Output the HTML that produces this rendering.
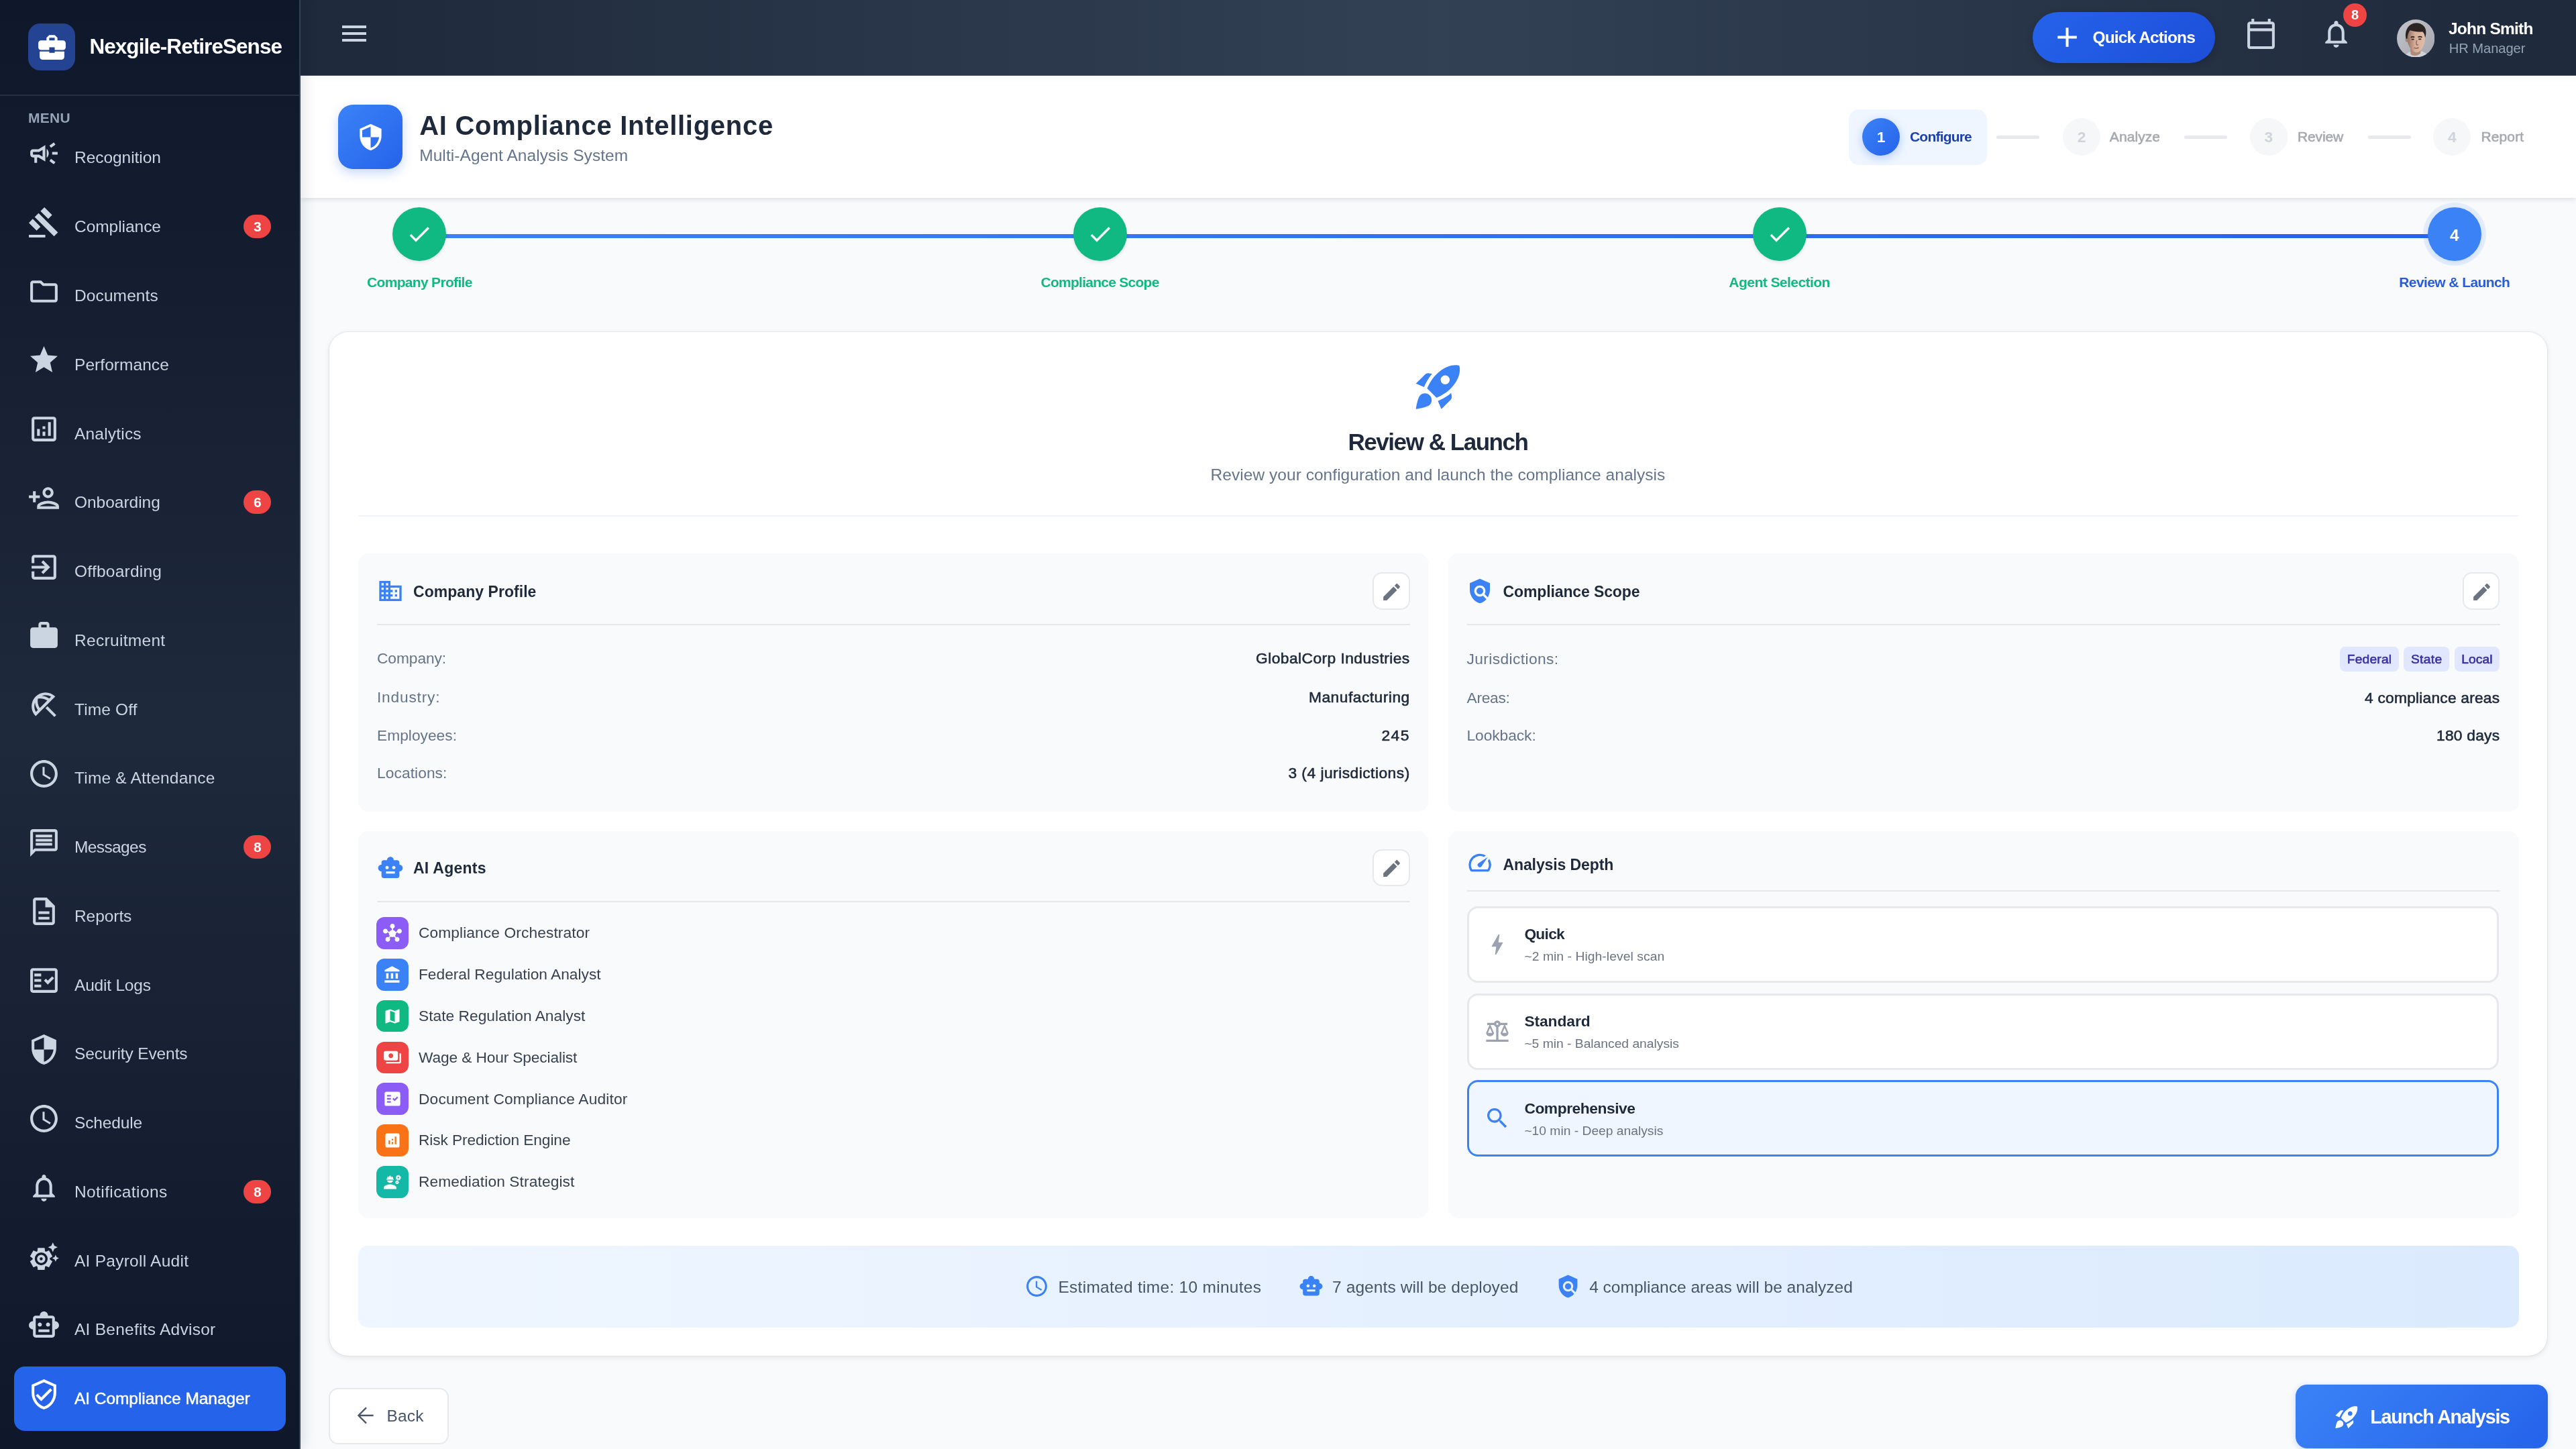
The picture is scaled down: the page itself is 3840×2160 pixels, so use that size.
<!DOCTYPE html>
<html lang="en"><head><meta charset="utf-8"><title>AI Compliance Intelligence</title>
<style>
*{box-sizing:border-box;margin:0;padding:0}
html,body{width:3840px;height:2160px;overflow:hidden;background:#f8fafc}
body{font-family:"Liberation Sans",sans-serif;}
#app{will-change:transform;line-height:0;font-size:12px;position:absolute;left:0;top:0;width:1920px;height:1080px;overflow:hidden;zoom:2;background:#f8fafc;color:#1e293b}
.t{white-space:nowrap;display:inline-block;line-height:1.2}
.ic{display:block;flex:none}
/* sidebar */
.sb{position:absolute;left:0;top:0;width:224px;height:1080px;background:linear-gradient(180deg,#0f172a 0%,#1e293b 50%,#0f172a 100%);border-right:1px solid #334155;box-shadow:2px 0 10px rgba(15,23,42,.12);z-index:5}
.sbh{position:absolute;left:0;top:0;width:223px;height:71.4px;border-bottom:1px solid rgba(148,163,184,.16)}
.logo{position:absolute;left:21px;top:17.7px;width:35px;height:35px;border-radius:9px;background:#244392;display:flex;align-items:center;justify-content:center}
.sbh .t{position:absolute;left:66.7px;top:25.5px}
.menu{position:absolute;left:21px;top:81.5px}
.it{position:absolute;left:10.4px;width:202.7px;height:48.1px;border-radius:8px;display:flex;align-items:center;padding:0 10.9px 0 10px;color:#cbd5e1}
.it .ic{margin-right:10.6px;position:relative;top:-3.3px}
.it.act{background:#2563eb;color:#fff}
.it.act .t{-webkit-text-stroke:.25px #fff}
.bdg{margin-left:auto;width:20.5px;height:17.5px;border-radius:9px;background:#ef4444;color:#fff;font-size:10.5px;font-weight:700;display:flex;align-items:center;justify-content:center}
/* topbar */
.top{position:absolute;left:224px;top:0;width:1696px;height:56.5px;background:linear-gradient(90deg,#1e293b 0%,#334155 50%,#1e293b 100%);z-index:4;border-bottom:.5px solid #4a566b}
.top>*{position:absolute}
.hb{left:28px;top:13px}
.qa{left:1291.1px;top:8.8px;width:136px;height:38.4px;border-radius:20px;background:linear-gradient(135deg,#2563eb,#1d4ed8);display:flex;align-items:center;box-shadow:0 2px 6px rgba(0,0,0,.18)}
.qa .ic{margin-left:13.5px;margin-right:6.7px}
.tcal{left:1449.1px;top:12.8px}
.tbell{left:1505px;top:13px}
.tb{left:1522.6px;top:2.4px;width:17.4px;height:17.4px;border-radius:50%;background:#ef4444;color:#fff;font-size:10px;font-weight:700;display:flex;align-items:center;justify-content:center}
.av{left:1562.3px;top:14.3px;width:28.2px;height:28.2px}
.un{left:1601px;top:13.8px}
.ur{left:1601.4px;top:30px}
/* main */
.mn{position:absolute;left:0;top:0;width:1920px;height:1080px}
.mn>*,.ph>*,.card>*{position:absolute}
.ph,.card{position:static !important}
.phbg{left:224px;top:56px;width:1696px;height:91.5px;background:#fff;box-shadow:0 1px 4px rgba(15,23,42,.12)}
.phi{left:252px;top:78px;width:48px;height:48px;border-radius:11px;background:linear-gradient(135deg,#3b82f6,#2563eb);display:flex;align-items:center;justify-content:center;box-shadow:0 3px 8px rgba(37,99,235,.25)}
.pht{left:312.6px;top:81.5px}
.phs{left:312.6px;top:108.3px}
.pill{left:1378px;top:81.3px;width:102.8px;height:41.9px;border-radius:7.5px;background:#eff6ff}
.pc{top:88.2px;width:28px;height:28px;border-radius:50%;background:#f6f7f9;color:#cfd3da;font-size:11.4px;font-weight:700;display:flex;align-items:center;justify-content:center}
.pc.on{background:linear-gradient(135deg,#3b82f6,#2563eb);color:#fff;box-shadow:0 2px 7px rgba(37,99,235,.3)}
.pl{top:95.3px}
.pcn{top:100.9px;width:32px;height:2.6px;border-radius:2px;background:#e8e9ec}
/* wizard stepper */
.wline{position:absolute;left:312.7px;top:174.4px;width:1516.7px;height:3.2px;background:linear-gradient(90deg,#3b82f6,#2563eb)}
.wc{top:154.5px;width:40px;height:40px;border-radius:50%;background:#10b981;display:flex;align-items:center;justify-content:center;color:#fff;font-weight:700;font-size:12.25px;box-shadow:0 1px 2.5px rgba(15,23,42,.1)}
.wc.cur{background:#3b82f6;padding-top:1.6px;box-shadow:0 0 0 3.5px rgba(59,130,246,.1),0 1px 3px rgba(59,130,246,.15)}
.wl{top:204px;width:200px;text-align:center}
/* card */
.cardbg{left:245.3px;top:247.3px;width:1653.2px;height:763.2px;border-radius:14px;background:#fff;box-shadow:0 0 0 .5px rgba(15,23,42,.05),0 1px 4px rgba(15,23,42,.10)}
.rk{left:1051.9px;top:268px}
.ct{left:871.75px;width:400px;text-align:center;top:319px}
.cs{left:771.75px;width:600px;text-align:center;top:346.5px}
.cdv{left:267px;top:384.1px;width:1610.5px;height:1px;background:#f1f5f9}
.sc{background:none}
.scbg{left:0;top:0;right:0;bottom:0;border-radius:7.5px;background:#f9fafb}
.sc>*{position:absolute}
.sh{left:13.8px;display:flex;align-items:center}
.sh .ic{margin-right:7.2px}
.eb{right:14.45px;top:14px;width:27.6px;height:27.6px;border-radius:7px;background:#fff;border:1px solid #e6e9ee;display:flex;align-items:center;justify-content:center}
.sdv{left:14px;right:14.3px;height:1px;background:#e5e7eb}
.rw{left:14px;right:14.4px;height:20px;display:flex;align-items:center;justify-content:space-between}
.rw>span{display:flex;align-items:center}
.chips{display:flex;gap:3.7px}
.chip{height:18.4px;padding:0 5.3px;border-radius:4px;background:#e0e7ff;color:#3730a3;display:flex;align-items:center}
.ag{left:13.7px;height:24px;display:flex;align-items:center}
.ab{width:24px;height:23.8px;border-radius:6px;display:flex;align-items:center;justify-content:center;margin-right:7.3px}
.op{left:14.1px;right:15px;height:57px;border-radius:8px;border:1.5px solid #e6e8ec;background:#fff;display:flex;align-items:center;padding-left:11.1px}
.op.sel{border-color:#3b82f6;background:#eff6ff}
.op .ic{margin-right:10.25px}
.ot>div{display:block;height:16.5px;position:relative;top:2.05px}
.ot>div+div{top:3.15px}
.sum{left:267px;top:928.3px;width:1610.4px;height:61.2px;border-radius:7.5px;background:linear-gradient(90deg,#eff6ff,#dbeafe);display:flex;align-items:center;justify-content:center;gap:27.7px;padding-left:0}
.si{display:flex;align-items:center}
.si .ic{margin-right:6.7px}
.si .t{position:relative;top:.5px}
/* footer */
.back{left:245px;top:1034.7px;width:89.3px;height:41.8px;border-radius:7px;background:#fff;border:1px solid #e6e9ee}
.back>*{position:absolute}
.back svg{left:20.1px;top:12.2px}
.back .t{left:42.3px;top:12.4px}
.launch{left:1711.2px;top:1032.05px;width:188px;height:47.3px;border-radius:8.5px;background:linear-gradient(135deg,#3b82f6,#2563eb);display:flex;align-items:center;padding-left:27.9px;padding-top:1.1px;box-shadow:0 1px 4px rgba(37,99,235,.22)}
.launch .ic{margin-right:7.3px}
.md{-webkit-text-stroke:.3px currentColor}
.sh .t{position:relative;top:.5px}
.sh.nd .ic{position:relative;top:-.6px}
.sh.nd .t{position:relative;top:1.2px}
.eb .ic{position:relative;top:.6px;left:.2px}
@media (max-width:2400px){html,body{width:1920px;height:1080px}#app{zoom:1}}

</style></head>
<body><div id="app">
<aside class="sb">
<div class="sbh"><div class="logo"><svg class="ic" width="24.5" height="24.5" viewBox="0 0 24 24" style="width:24.5px;height:24.5px;fill:#fff;"><path d="M10 16v-1H3.01L3 19c0 1.11.89 2 2 2h14c1.11 0 2-.89 2-2v-4h-7v1h-4zm10-9h-4.01V5l-2-2h-4l-2 2v2H4c-1.1 0-2 .9-2 2v3c0 1.11.89 2 2 2h6v-2h4v2h6c1.1 0 2-.9 2-2V9c0-1.1-.9-2-2-2zm-6 0h-4V5h4v2z"/></svg></div><span id="t0" class="t" style="font-size:15.75px;font-weight:700;color:#fff;letter-spacing:-0.473px;">Nexgile-RetireSense</span></div>
<div class="menu"><span id="t1" class="t" style="font-size:10.5px;font-weight:700;color:#94a3b8;letter-spacing:0.126px;">MENU</span></div>
<div class="it" style="top:93.55px"><svg class="ic" width="24.5" height="24.5" viewBox="0 0 24 24" style="width:24.5px;height:24.5px;fill:currentColor;"><path d="M18 11v2h4v-2h-4zm-2 6.61c.96.71 2.21 1.65 3.2 2.39.4-.53.8-1.07 1.2-1.6-.99-.74-2.24-1.68-3.2-2.4-.4.54-.8 1.08-1.2 1.61zM20.4 5.6c-.4-.53-.8-1.07-1.2-1.6-.99.74-2.24 1.68-3.2 2.4.4.53.8 1.07 1.2 1.6.96-.72 2.21-1.65 3.2-2.4zM4 9c-1.1 0-2 .9-2 2v2c0 1.1.9 2 2 2h1v4h2v-4h1l5 3V6L8 9H4zm5.03 1.71L11 9.53v4.94l-1.97-1.18-.48-.29H4v-2h4.55l.48-.29zM15.5 12c0-1.33-.58-2.53-1.5-3.35v6.69c.92-.81 1.5-2.01 1.5-3.34z"/></svg><span id="t2" class="t" style="font-size:12.25px;font-weight:400;letter-spacing:-0.020px;">Recognition</span></div>
<div class="it" style="top:144.93px"><svg class="ic" width="24.5" height="24.5" viewBox="0 0 24 24" style="width:24.5px;height:24.5px;fill:currentColor;"><path d="M1 21h12v2H1v-2zM5.245 8.07l2.83-2.827 14.14 14.142-2.828 2.828L5.245 8.07zM12.317 1l5.657 5.656-2.83 2.83-5.654-5.66L12.317 1zM3.825 9.485l5.657 5.657-2.828 2.828-5.657-5.657 2.828-2.828z"/></svg><span id="t3" class="t" style="font-size:12.25px;font-weight:400;letter-spacing:-0.021px;">Compliance</span><span class="bdg">3</span></div>
<div class="it" style="top:196.31px"><svg class="ic" width="24.5" height="24.5" viewBox="0 0 24 24" style="width:24.5px;height:24.5px;fill:currentColor;"><path d="M9.17 6l2 2H20v10H4V6h5.17M10 4H4c-1.1 0-1.99.9-1.99 2L2 18c0 1.1.9 2 2 2h16c1.1 0 2-.9 2-2V8c0-1.1-.9-2-2-2h-8l-2-2z"/></svg><span id="t4" class="t" style="font-size:12.25px;font-weight:400;letter-spacing:0.055px;">Documents</span></div>
<div class="it" style="top:247.69px"><svg class="ic" width="24.5" height="24.5" viewBox="0 0 24 24" style="width:24.5px;height:24.5px;fill:currentColor;"><path d="M12 17.27L18.18 21l-1.64-7.03L22 9.24l-7.19-.61L12 2 9.19 8.63 2 9.24l5.46 4.73L5.82 21z"/></svg><span id="t5" class="t" style="font-size:12.25px;font-weight:400;letter-spacing:0.027px;">Performance</span></div>
<div class="it" style="top:299.07px"><svg class="ic" width="24.5" height="24.5" viewBox="0 0 24 24" style="width:24.5px;height:24.5px;fill:currentColor;"><path d="M19 3H5c-1.1 0-2 .9-2 2v14c0 1.1.9 2 2 2h14c1.1 0 2-.9 2-2V5c0-1.1-.9-2-2-2zm0 16H5V5h14v14zM7 12h2v5H7zm8-5h2v10h-2zm-4 7h2v3h-2zm0-4h2v2h-2z"/></svg><span id="t6" class="t" style="font-size:12.25px;font-weight:400;letter-spacing:0.097px;">Analytics</span></div>
<div class="it" style="top:350.45px"><svg class="ic" width="24.5" height="24.5" viewBox="0 0 24 24" style="width:24.5px;height:24.5px;fill:currentColor;"><path d="M15 12c2.21 0 4-1.79 4-4s-1.79-4-4-4-4 1.79-4 4 1.79 4 4 4zm0-6c1.1 0 2 .9 2 2s-.9 2-2 2-2-.9-2-2 .9-2 2-2zm0 8c-2.67 0-8 1.34-8 4v2h16v-2c0-2.66-5.33-4-8-4zm-6 4c.22-.72 3.31-2 6-2 2.7 0 5.8 1.29 6 2H9zm-3-3v-3h3v-2H6V7H4v3H1v2h3v3z"/></svg><span id="t7" class="t" style="font-size:12.25px;font-weight:400;letter-spacing:-0.014px;">Onboarding</span><span class="bdg">6</span></div>
<div class="it" style="top:401.83px"><svg class="ic" width="24.5" height="24.5" viewBox="0 0 24 24" style="width:24.5px;height:24.5px;fill:currentColor;"><path d="M10.09 15.59L11.5 17l5-5-5-5-1.41 1.41L12.67 11H3v2h9.67l-2.58 2.59zM19 3H5c-1.11 0-2 .9-2 2v4h2V5h14v14H5v-4H3v4c0 1.1.89 2 2 2h14c1.1 0 2-.9 2-2V5c0-1.1-.9-2-2-2z"/></svg><span id="t8" class="t" style="font-size:12.25px;font-weight:400;letter-spacing:0.120px;">Offboarding</span></div>
<div class="it" style="top:453.21px"><svg class="ic" width="24.5" height="24.5" viewBox="0 0 24 24" style="width:24.5px;height:24.5px;fill:currentColor;"><path d="M20 6h-4V4c0-1.11-.89-2-2-2h-4c-1.11 0-2 .89-2 2v2H4c-1.11 0-1.99.89-1.99 2L2 19c0 1.11.89 2 2 2h16c1.11 0 2-.89 2-2V8c0-1.11-.89-2-2-2zm-6 0h-4V4h4v2z"/></svg><span id="t9" class="t" style="font-size:12.25px;font-weight:400;letter-spacing:0.156px;">Recruitment</span></div>
<div class="it" style="top:504.59px"><svg class="ic" width="24.5" height="24.5" viewBox="0 0 24 24" style="width:24.5px;height:24.5px;fill:currentColor;"><path d="M21 19.57l-1.427 1.428-6.442-6.442 1.43-1.428zM13.12 3c-2.58 0-5.16.98-7.14 2.95l-.01.01c-3.95 3.95-3.95 10.36 0 14.31l14.3-14.31C18.3 3.99 15.71 3 13.12 3zM6.14 17.27C5.4 16.03 5 14.61 5 13.12c0-.93.16-1.82.46-2.67.19 1.91.89 3.79 2.07 5.44l-1.39 1.38zm2.84-2.84C7.63 12.38 7.12 9.93 7.6 7.6c.58-.12 1.16-.18 1.75-.18 1.8 0 3.55.55 5.08 1.56l-5.45 5.45zm1.47-8.97c.85-.3 1.74-.46 2.67-.46 1.49 0 2.91.4 4.15 1.14l-1.39 1.39c-1.65-1.18-3.52-1.88-5.43-2.07z"/></svg><span id="t10" class="t" style="font-size:12.25px;font-weight:400;letter-spacing:0.073px;">Time Off</span></div>
<div class="it" style="top:555.97px"><svg class="ic" width="24.5" height="24.5" viewBox="0 0 24 24" style="width:24.5px;height:24.5px;fill:currentColor;"><path d="M11.99 2C6.47 2 2 6.48 2 12s4.47 10 9.99 10C17.52 22 22 17.52 22 12S17.52 2 11.99 2zM12 20c-4.42 0-8-3.58-8-8s3.58-8 8-8 8 3.58 8 8-3.58 8-8 8zm.5-13H11v6l5.25 3.15.75-1.23-4.5-2.67z"/></svg><span id="t11" class="t" style="font-size:12.25px;font-weight:400;letter-spacing:0.103px;">Time &amp; Attendance</span></div>
<div class="it" style="top:607.35px"><svg class="ic" width="24.5" height="24.5" viewBox="0 0 24 24" style="width:24.5px;height:24.5px;fill:currentColor;"><path d="M4 4h16v12H5.17L4 17.17V4m0-2c-1.1 0-1.99.9-1.99 2L2 22l4-4h14c1.1 0 2-.9 2-2V4c0-1.1-.9-2-2-2H4zm2 10h12v2H6v-2zm0-3h12v2H6V9zm0-3h12v2H6V6z"/></svg><span id="t12" class="t" style="font-size:12.25px;font-weight:400;letter-spacing:-0.305px;">Messages</span><span class="bdg">8</span></div>
<div class="it" style="top:658.73px"><svg class="ic" width="24.5" height="24.5" viewBox="0 0 24 24" style="width:24.5px;height:24.5px;fill:currentColor;"><path d="M8 16h8v2H8zm0-4h8v2H8zm6-10H6c-1.1 0-2 .9-2 2v16c0 1.1.89 2 1.99 2H18c1.1 0 2-.9 2-2V8l-6-6zm4 18H6V4h7v5h5v11z"/></svg><span id="t13" class="t" style="font-size:12.25px;font-weight:400;letter-spacing:-0.033px;">Reports</span></div>
<div class="it" style="top:710.11px"><svg class="ic" width="24.5" height="24.5" viewBox="0 0 24 24" style="width:24.5px;height:24.5px;fill:currentColor;"><path d="M20 3H4c-1.1 0-2 .9-2 2v14c0 1.1.9 2 2 2h16c1.1 0 2-.9 2-2V5c0-1.1-.9-2-2-2zm0 16H4V5h16v14zM19.41 10.42L17.99 9l-3.17 3.17-1.41-1.42L12 12.16 14.82 15zM5 7h5v2H5zm0 4h5v2H5zm0 4h5v2H5z"/></svg><span id="t14" class="t" style="font-size:12.25px;font-weight:400;letter-spacing:-0.099px;">Audit Logs</span></div>
<div class="it" style="top:761.49px"><svg class="ic" width="24.5" height="24.5" viewBox="0 0 24 24" style="width:24.5px;height:24.5px;fill:currentColor;"><path d="M12 1L3 5v6c0 5.55 3.84 10.74 9 12 5.16-1.26 9-6.45 9-12V5l-9-4zm0 10.99h7c-.53 4.12-3.28 7.79-7 8.94V12H5V6.3l7-3.11v8.8z"/></svg><span id="t15" class="t" style="font-size:12.25px;font-weight:400;letter-spacing:-0.058px;">Security Events</span></div>
<div class="it" style="top:812.87px"><svg class="ic" width="24.5" height="24.5" viewBox="0 0 24 24" style="width:24.5px;height:24.5px;fill:currentColor;"><path d="M11.99 2C6.47 2 2 6.48 2 12s4.47 10 9.99 10C17.52 22 22 17.52 22 12S17.52 2 11.99 2zM12 20c-4.42 0-8-3.58-8-8s3.58-8 8-8 8 3.58 8 8-3.58 8-8 8zm.5-13H11v6l5.25 3.15.75-1.23-4.5-2.67z"/></svg><span id="t16" class="t" style="font-size:12.25px;font-weight:400;letter-spacing:-0.069px;">Schedule</span></div>
<div class="it" style="top:864.25px"><svg class="ic" width="24.5" height="24.5" viewBox="0 0 24 24" style="width:24.5px;height:24.5px;fill:currentColor;"><path d="M12 22c1.1 0 2-.9 2-2h-4c0 1.1.9 2 2 2zm6-6v-5c0-3.07-1.63-5.64-4.5-6.32V4c0-.83-.67-1.5-1.5-1.5s-1.5.67-1.5 1.5v.68C7.64 5.36 6 7.92 6 11v5l-2 2v1h16v-1l-2-2zm-2 1H8v-6c0-2.48 1.51-4.5 4-4.5s4 2.02 4 4.5v6z"/></svg><span id="t17" class="t" style="font-size:12.25px;font-weight:400;letter-spacing:0.198px;">Notifications</span><span class="bdg">8</span></div>
<div class="it" style="top:915.63px"><svg class="ic" viewBox="0 0 24 24" style="width:24.5px;height:24.5px;fill:currentColor"><path d="M17.41 6.59L15 5.5l2.41-1.09L18.5 2l1.09 2.41L22 5.5l-2.41 1.09L18.5 9l-1.09-2.41zm3.87 6.13L20.5 11l-.78 1.72-1.72.78 1.72.78.78 1.72.78-1.72L23 13.5l-1.72-.78z"/><path fill-rule="evenodd" d="M16.24 14.37l1.94 1.47-2.5 4.33-2.24-.94c-.2.13-.42.26-.64.37l-.3 2.4h-5l-.3-2.41c-.22-.11-.43-.23-.64-.37l-2.24.94-2.5-4.33 1.94-1.47c-.01-.11-.01-.24-.01-.36s0-.25.01-.37l-1.94-1.47 2.5-4.33 2.24.94c.2-.13.42-.26.64-.37L7.5 6h5l.3 2.41c.22.11.43.23.64.37l2.24-.94 2.5 4.33-1.94 1.47c.01.12.01.24.01.37s0 .24-.01.36zM10 9.3a4.7 4.7 0 1 0 0 9.4 4.7 4.7 0 0 0 0-9.4z"/><path fill-rule="evenodd" d="M10 11a3 3 0 1 0 0 6 3 3 0 0 0 0-6zm0 1.9a1.1 1.1 0 1 1 0 2.2 1.1 1.1 0 0 1 0-2.2z"/></svg><span id="t18" class="t" style="font-size:12.25px;font-weight:400;letter-spacing:0.128px;">AI Payroll Audit</span></div>
<div class="it" style="top:967.01px"><svg class="ic" width="24.5" height="24.5" viewBox="0 0 24 24" style="width:24.5px;height:24.5px;fill:currentColor;"><path d="M20 9V7c0-1.1-.9-2-2-2h-3c0-1.66-1.34-3-3-3S9 3.34 9 5H6c-1.1 0-2 .9-2 2v2c-1.66 0-3 1.34-3 3s1.34 3 3 3v4c0 1.1.9 2 2 2h12c1.1 0 2-.9 2-2v-4c1.66 0 3-1.34 3-3s-1.34-3-3-3zm-2 10H6V7h12v12zm-9-6c-.83 0-1.5-.67-1.5-1.5S8.17 10 9 10s1.5.67 1.5 1.5S9.83 13 9 13zm7.5-1.5c0 .83-.67 1.5-1.5 1.5s-1.5-.67-1.5-1.5.67-1.5 1.5-1.5 1.5.67 1.5 1.5zM8 15h8v2H8v-2z"/></svg><span id="t19" class="t" style="font-size:12.25px;font-weight:400;letter-spacing:0.127px;">AI Benefits Advisor</span></div>
<div class="it act" style="top:1018.39px"><svg class="ic" width="24.5" height="24.5" viewBox="0 0 24 24" style="width:24.5px;height:24.5px;fill:currentColor;"><path d="M12 1L3 5v6c0 5.55 3.84 10.74 9 12 5.16-1.26 9-6.45 9-12V5l-9-4zm7 10c0 4.52-2.98 8.69-7 9.93-4.02-1.24-7-5.41-7-9.93V6.3l7-3.11 7 3.11V11zm-11.59.59L6 13l4 4 8-8-1.41-1.42L10 14.17z"/></svg><span id="t20" class="t" style="font-size:12.25px;font-weight:400;letter-spacing:-0.026px;">AI Compliance Manager</span></div>
</aside>
<header class="top">
<div class="hb"><svg class="ic" width="24" height="24" viewBox="0 0 24 24" style="width:24px;height:24px;fill:#cbd5e1;"><path d="M3 18h18v-2H3v2zm0-5h18v-2H3v2zm0-7v2h18V6H3z"/></svg></div>
<div class="qa"><svg class="ic" width="24.5" height="24.5" viewBox="0 0 24 24" style="width:24.5px;height:24.5px;fill:#fff;"><path d="M19 13h-6v6h-2v-6H5v-2h6V5h2v6h6v2z"/></svg><span id="t21" class="t" style="font-size:12.25px;font-weight:700;color:#fff;letter-spacing:-0.443px;">Quick Actions</span></div>
<div class="tcal"><svg class="ic" width="24.5" height="24.5" viewBox="0 0 24 24" style="width:24.5px;height:24.5px;fill:#cbd5e1;"><path d="M20 3h-1V1h-2v2H7V1H5v2H4c-1.1 0-2 .9-2 2v16c0 1.1.9 2 2 2h16c1.1 0 2-.9 2-2V5c0-1.1-.9-2-2-2zm0 18H4V10h16v11zm0-13H4V5h16v3z"/></svg></div>
<div class="tbell"><svg class="ic" width="24.5" height="24.5" viewBox="0 0 24 24" style="width:24.5px;height:24.5px;fill:#cbd5e1;"><path d="M12 22c1.1 0 2-.9 2-2h-4c0 1.1.9 2 2 2zm6-6v-5c0-3.07-1.63-5.64-4.5-6.32V4c0-.83-.67-1.5-1.5-1.5s-1.5.67-1.5 1.5v.68C7.64 5.36 6 7.92 6 11v5l-2 2v1h16v-1l-2-2zm-2 1H8v-6c0-2.48 1.51-4.5 4-4.5s4 2.02 4 4.5v6z"/></svg></div><span class="tb">8</span>
<svg class="av" viewBox="0 0 28 28" width="28" height="28"><defs><clipPath id="avc"><circle cx="14" cy="14" r="14"/></clipPath><linearGradient id="avg" x1="0" y1="0" x2="1" y2="1"><stop offset="0" stop-color="#c3c4cb"/><stop offset="1" stop-color="#a4a6af"/></linearGradient><linearGradient id="avf" x1="0" y1="0" x2="1" y2="0"><stop offset="0" stop-color="#8d6b5d"/><stop offset=".45" stop-color="#d6ae99"/><stop offset="1" stop-color="#e2bda8"/></linearGradient></defs><g clip-path="url(#avc)"><rect width="28" height="28" fill="url(#avg)"/><path d="M6 28c.4-2.300 2-3.600 4.500-4.300l7.500-.2c2.600.6 4.600 2 5 4.500z" fill="#cfd2d9"/><path d="M9.800 20.500l.4 5.200c1.500 1.600 5.400 1.500 7.200-.6l.8-5.600z" fill="#b08a78"/><path d="M7.400 13.200C7.300 9.600 10.300 7.300 14.300 7.500c4.200.2 6.700 2.900 6.500 7-.2 4.300-2.500 9.600-6 10-3 .3-7.200-5-7.400-11.300z" fill="url(#avf)"/><ellipse cx="7.300" cy="15" rx="1" ry="1.700" fill="#a98271"/><path d="M6.700 14.200C5.700 9.500 7.400 4.600 12 3c4.200-1.400 8.700.8 9.400 4.900.4 2.200 0 4.300-.5 5.600-.2-2.200-.9-3.700-1.900-4.500-3 .6-6.800-.1-9.200-.9-1.300 1.500-2 3.600-2.100 6.300z" fill="#2b2422"/><path d="M10.300 13.300c.8-.5 1.900-.5 2.700-.1M15.600 13.100c.9-.5 2.100-.5 3 .1" stroke="#2f2320" stroke-width=".8" fill="none"/><path d="M10.800 14.700h1.900M16 14.600h2" stroke="#3a2a25" stroke-width=".9"/><path d="M14.700 15.500c-.3 1.300-.6 2.300-.2 3.100.4.300 1 .3 1.400.1" stroke="#8d6658" stroke-width=".7" fill="none"/><path d="M12.700 21c1 .4 2.400.4 3.500-.1" stroke="#9c5f57" stroke-width=".8" fill="none"/></g></svg>
<div class="un"><span id="t22" class="t" style="font-size:12.25px;font-weight:700;color:#fff;letter-spacing:-0.388px;">John Smith</span></div>
<div class="ur"><span id="t23" class="t" style="font-size:10.1px;font-weight:400;color:#94a3b8;letter-spacing:-0.047px;">HR Manager</span></div>
</header>
<main class="mn">
<div class="ph"><div class="phbg"></div>
<div class="phi"><svg class="ic" width="21.5" height="21.5" viewBox="0 0 24 24" style="width:21.5px;height:21.5px;fill:#fff;"><path d="M12 1L3 5v6c0 5.55 3.84 10.74 9 12 5.16-1.26 9-6.45 9-12V5l-9-4zm0 10.99h7c-.53 4.12-3.28 7.79-7 8.94V12H5V6.3l7-3.11v8.8z"/></svg></div>
<div class="pht"><span id="t24" class="t" style="font-size:20px;font-weight:700;color:#1e293b;letter-spacing:0.360px;">AI Compliance Intelligence</span></div>
<div class="phs"><span id="t25" class="t" style="font-size:12.25px;font-weight:400;color:#64748b;letter-spacing:0.037px;">Multi-Agent Analysis System</span></div>
<div class="pill"></div>
<div class="pc on" style="left:1388.0px">1</div><div class="pl" style="left:1423.5px"><span id="t26" class="t" style="font-size:10.5px;font-weight:700;color:#1e40af;letter-spacing:-0.398px;">Configure</span></div>
<div class="pc" style="left:1537.5px">2</div><div class="pl" style="left:1572.4px"><span id="t27" class="t md" style="font-size:10.5px;font-weight:400;color:#a6a9b0;letter-spacing:0.040px;">Analyze</span></div>
<div class="pc" style="left:1676.9px">3</div><div class="pl" style="left:1712.5px"><span id="t28" class="t md" style="font-size:10.5px;font-weight:400;color:#a6a9b0;letter-spacing:-0.067px;">Review</span></div>
<div class="pc" style="left:1813.7px">4</div><div class="pl" style="left:1849.2px"><span id="t29" class="t md" style="font-size:10.5px;font-weight:400;color:#a6a9b0;letter-spacing:0.076px;">Report</span></div>
<div class="pcn" style="left:1488px"></div>
<div class="pcn" style="left:1628.2px"></div>
<div class="pcn" style="left:1765px"></div>
</div>
<div class="wline"></div>
<div class="wc" style="left:292.7px"><svg class="ic" width="20" height="20" viewBox="0 0 24 24" style="width:20px;height:20px;fill:#fff;"><path d="M9 16.17L4.83 12l-1.42 1.41L9 19 21 7l-1.41-1.41z"/></svg></div><div class="wl" style="left:212.7px"><span id="t30" class="t" style="font-size:10.5px;font-weight:700;color:#10b981;letter-spacing:-0.338px;">Company Profile</span></div>
<div class="wc" style="left:799.8px"><svg class="ic" width="20" height="20" viewBox="0 0 24 24" style="width:20px;height:20px;fill:#fff;"><path d="M9 16.17L4.83 12l-1.42 1.41L9 19 21 7l-1.41-1.41z"/></svg></div><div class="wl" style="left:719.8px"><span id="t31" class="t" style="font-size:10.5px;font-weight:700;color:#10b981;letter-spacing:-0.370px;">Compliance Scope</span></div>
<div class="wc" style="left:1306.3px"><svg class="ic" width="20" height="20" viewBox="0 0 24 24" style="width:20px;height:20px;fill:#fff;"><path d="M9 16.17L4.83 12l-1.42 1.41L9 19 21 7l-1.41-1.41z"/></svg></div><div class="wl" style="left:1226.3px"><span id="t32" class="t" style="font-size:10.5px;font-weight:700;color:#10b981;letter-spacing:-0.275px;">Agent Selection</span></div>
<div class="wc cur" style="left:1809.4px">4</div><div class="wl" style="left:1729.4px"><span id="t33" class="t" style="font-size:10.5px;font-weight:700;color:#2a5cd8;letter-spacing:-0.296px;">Review &amp; Launch</span></div>
<section class="card"><div class="cardbg"></div>
<div class="rk"><svg class="ic" width="40.25" height="40.25" viewBox="0 0 24 24" style="width:40.25px;height:40.25px;fill:#3b82f6;"><path d="M9.19 6.35c-2.04 2.29-3.44 5.58-3.57 5.89L2 10.69l4.05-4.05c.47-.47 1.15-.68 1.81-.55l1.33.26zM11.17 17s3.74-1.55 5.89-3.7c5.4-5.4 4.5-9.62 4.21-10.57-.95-.3-5.17-1.19-10.57 4.21C8.55 9.09 7 12.83 7 12.83L11.17 17zm6.48-2.19c-2.29 2.04-5.58 3.44-5.89 3.57L13.31 22l4.05-4.05c.47-.47.68-1.15.55-1.81l-.26-1.33zM9 18c0 .83-.34 1.58-.88 2.12C6.94 21.3 2 22 2 22s.7-4.94 1.88-6.12C4.42 15.34 5.17 15 6 15c1.66 0 3 1.34 3 3zm4-9c0-1.1.9-2 2-2s2 .9 2 2-.9 2-2 2-2-.9-2-2z"/></svg></div>
<div class="ct"><span id="t34" class="t" style="font-size:17.5px;font-weight:700;color:#1e293b;letter-spacing:-0.728px;">Review &amp; Launch</span></div>
<div class="cs"><span id="t35" class="t" style="font-size:12.25px;font-weight:400;color:#64748b;letter-spacing:0.019px;">Review your configuration and launch the compliance analysis</span></div>
<div class="cdv"></div>
<div class="sc" style="left:267px;top:412.7px;width:798.25px;height:192.5px"><div class="scbg" style="right:.6px"></div>
<div class="sh" style="top:14px;height:28px"><svg class="ic" width="20" height="20" viewBox="0 0 24 24" style="width:20px;height:20px;fill:#3b82f6;"><path d="M12 7V3H2v18h20V7H12zM6 19H4v-2h2v2zm0-4H4v-2h2v2zm0-4H4V9h2v2zm0-4H4V5h2v2zm4 12H8v-2h2v2zm0-4H8v-2h2v2zm0-4H8V9h2v2zm0-4H8V5h2v2zm10 12h-8v-2h2v-2h-2v-2h2v-2h-2V9h8v10zm-2-8h-2v2h2v-2zm0 4h-2v2h2v-2z"/></svg><span id="t36" class="t" style="font-size:11.5px;font-weight:700;color:#1e293b;letter-spacing:0.023px;">Company Profile</span></div><div class="eb"><svg class="ic" width="16.5" height="16.5" viewBox="0 0 24 24" style="width:16.5px;height:16.5px;fill:#6b7280;"><path d="M3 17.25V21h3.75L17.81 9.94l-3.75-3.75L3 17.25zM20.71 7.04c.39-.39.39-1.02 0-1.41l-2.34-2.34c-.39-.39-1.02-.39-1.41 0l-1.83 1.83 3.75 3.75 1.83-1.83z"/></svg></div>
<div class="sdv" style="top:52.3px"></div>
<div class="rw" style="top:68.15px"><span><span id="t37" class="t" style="font-size:11.375px;font-weight:400;color:#64748b;letter-spacing:-0.036px;">Company:</span></span><span><span id="t38" class="t md" style="font-size:11.375px;font-weight:400;color:#1e293b;letter-spacing:0.229px;">GlobalCorp Industries</span></span></div>
<div class="rw" style="top:97.15px"><span><span id="t39" class="t" style="font-size:11.375px;font-weight:400;color:#64748b;letter-spacing:0.397px;">Industry:</span></span><span><span id="t40" class="t md" style="font-size:11.375px;font-weight:400;color:#1e293b;letter-spacing:0.251px;">Manufacturing</span></span></div>
<div class="rw" style="top:125.45px"><span><span id="t41" class="t" style="font-size:11.375px;font-weight:400;color:#64748b;letter-spacing:0.007px;">Employees:</span></span><span><span id="t42" class="t md" style="font-size:11.375px;font-weight:400;color:#1e293b;letter-spacing:0.710px;">245</span></span></div>
<div class="rw" style="top:153.45px"><span><span id="t43" class="t" style="font-size:11.375px;font-weight:400;color:#64748b;letter-spacing:0.038px;">Locations:</span></span><span><span id="t44" class="t md" style="font-size:11.375px;font-weight:400;color:#1e293b;letter-spacing:0.246px;">3 (4 jurisdictions)</span></span></div>
</div>
<div class="sc" style="left:1079.25px;top:412.7px;width:798.3px;height:192.5px"><div class="scbg"></div>
<div class="sh" style="top:14px;height:28px"><svg class="ic" width="20" height="20" viewBox="0 0 24 24" style="width:20px;height:20px;fill:#3b82f6;"><path d="M21 5l-9-4-9 4v6c0 5.55 3.84 10.74 9 12 2.3-.56 4.33-1.9 5.88-3.71l-3.12-3.12c-1.94 1.29-4.58 1.07-6.29-.64-1.95-1.95-1.95-5.12 0-7.07 1.95-1.95 5.12-1.95 7.07 0 1.71 1.71 1.92 4.35.64 6.29l2.9 2.9C20.29 15.69 21 13.38 21 11V5zM12 9a3 3 0 1 0 0 6 3 3 0 0 0 0-6z"/></svg><span id="t48" class="t" style="font-size:11.5px;font-weight:700;color:#1e293b;letter-spacing:-0.059px;">Compliance Scope</span></div><div class="eb"><svg class="ic" width="16.5" height="16.5" viewBox="0 0 24 24" style="width:16.5px;height:16.5px;fill:#6b7280;"><path d="M3 17.25V21h3.75L17.81 9.94l-3.75-3.75L3 17.25zM20.71 7.04c.39-.39.39-1.02 0-1.41l-2.34-2.34c-.39-.39-1.02-.39-1.41 0l-1.83 1.83 3.75 3.75 1.83-1.83z"/></svg></div>
<div class="sdv" style="top:52.3px"></div>
<div class="rw" style="top:68.45px"><span><span id="t49" class="t" style="font-size:11.375px;font-weight:400;color:#64748b;letter-spacing:0.196px;">Jurisdictions:</span></span><span><span class="chips"><span class="chip"><span id="t45" class="t md" style="font-size:9.625px;font-weight:400;letter-spacing:0.094px;">Federal</span></span><span class="chip"><span id="t46" class="t md" style="font-size:9.625px;font-weight:400;letter-spacing:0.181px;">State</span></span><span class="chip"><span id="t47" class="t md" style="font-size:9.625px;font-weight:400;letter-spacing:0.046px;">Local</span></span></span></span></div>
<div class="rw" style="top:97.65px"><span><span id="t50" class="t" style="font-size:11.375px;font-weight:400;color:#64748b;letter-spacing:-0.136px;">Areas:</span></span><span><span id="t51" class="t md" style="font-size:11.375px;font-weight:400;color:#1e293b;letter-spacing:0.109px;">4 compliance areas</span></span></div>
<div class="rw" style="top:125.65px"><span><span id="t52" class="t" style="font-size:11.375px;font-weight:400;color:#64748b;letter-spacing:-0.032px;">Lookback:</span></span><span><span id="t53" class="t md" style="font-size:11.375px;font-weight:400;color:#1e293b;letter-spacing:0.118px;">180 days</span></span></div>
</div>
<div class="sc" style="left:267px;top:619.1px;width:798.25px;height:288.9px"><div class="scbg" style="top:.4px;right:.6px"></div>
<div class="sh" style="top:14px;height:28px"><svg class="ic" width="20" height="20" viewBox="0 0 24 24" style="width:20px;height:20px;fill:#3b82f6;"><path d="M20 9V7c0-1.1-.9-2-2-2h-3c0-1.66-1.34-3-3-3S9 3.34 9 5H6c-1.1 0-2 .9-2 2v2c-1.66 0-3 1.34-3 3s1.34 3 3 3v4c0 1.1.9 2 2 2h12c1.1 0 2-.9 2-2v-4c1.66 0 3-1.34 3-3s-1.34-3-3-3zM7.5 11.5c0-.83.67-1.5 1.5-1.5s1.5.67 1.5 1.5S9.83 13 9 13s-1.5-.67-1.5-1.5zM16 17H8v-2h8v2zm-1-4c-.83 0-1.5-.67-1.5-1.5S14.17 10 15 10s1.5.67 1.5 1.5S15.83 13 15 13z"/></svg><span id="t54" class="t" style="font-size:11.5px;font-weight:700;color:#1e293b;letter-spacing:0.131px;">AI Agents</span></div><div class="eb"><svg class="ic" width="16.5" height="16.5" viewBox="0 0 24 24" style="width:16.5px;height:16.5px;fill:#6b7280;"><path d="M3 17.25V21h3.75L17.81 9.94l-3.75-3.75L3 17.25zM20.71 7.04c.39-.39.39-1.02 0-1.41l-2.34-2.34c-.39-.39-1.02-.39-1.41 0l-1.83 1.83 3.75 3.75 1.83-1.83z"/></svg></div>
<div class="sdv" style="top:52.3px"></div>
<div class="ag" style="top:64.4px"><span class="ab" style="background:#8b5cf6"><svg class="ic" width="14" height="14" viewBox="0 0 24 24" style="width:14px;height:14px;fill:#fff;"><path d="M8.4 18.2c.38.5.6 1.12.6 1.8 0 1.66-1.34 3-3 3s-3-1.34-3-3 1.34-3 3-3c.44 0 .85.09 1.23.26l1.41-1.77c-.92-1.03-1.29-2.39-1.09-3.69l-2.03-.68C4.980 11.95 4.060 12.5 3 12.5c-1.66 0-3-1.34-3-3s1.34-3 3-3 3 1.34 3 3c0 .07 0 .14-.01.21l2.030.68c.64-1.21 1.82-2.090 3.22-2.32V5.910C9.960 5.570 9 4.400 9 3c0-1.660 1.340-3 3-3s3 1.340 3 3c0 1.400-.96 2.570-2.250 2.910v2.160c1.400.23 2.580 1.110 3.220 2.320l2.030-.68c-.01-.07-.01-.14-.01-.21 0-1.660 1.340-3 3-3s3 1.340 3 3-1.340 3-3 3c-1.060 0-1.980-.55-2.520-1.370l-2.030.68c.2 1.290-.16 2.650-1.090 3.690l1.410 1.770c.38-.17.79-.26 1.230-.26 1.660 0 3 1.340 3 3s-1.340 3-3 3-3-1.340-3-3c0-.68.22-1.300.6-1.800l-1.410-1.770c-1.350.75-3.010.76-4.370 0l-1.410 1.770z"/></svg></span><span id="t55" class="t" style="font-size:11.375px;font-weight:400;color:#374151;letter-spacing:0.048px;">Compliance Orchestrator</span></div>
<div class="ag" style="top:95.3px"><span class="ab" style="background:#3b82f6"><svg class="ic" width="14" height="14" viewBox="0 0 24 24" style="width:14px;height:14px;fill:#fff;"><path d="M4 10v7h3v-7H4zm6 0v7h3v-7h-3zM2 22h19v-3H2v3zm14-12v7h3v-7h-3zm-4.500-9L2 6v2h19V6l-9.500-5z"/></svg></span><span id="t56" class="t" style="font-size:11.375px;font-weight:400;color:#374151;letter-spacing:-0.006px;">Federal Regulation Analyst</span></div>
<div class="ag" style="top:126.2px"><span class="ab" style="background:#10b981"><svg class="ic" width="14" height="14" viewBox="0 0 24 24" style="width:14px;height:14px;fill:#fff;"><path d="M20.5 3l-.16.03L15 5.1 9 3 3.36 4.9c-.21.07-.36.25-.36.48V20.5c0 .28.22.5.5.5l.16-.03L9 18.9l6 2.1 5.64-1.9c.21-.07.36-.25.36-.48V3.5c0-.28-.22-.5-.5-.5zM15 19l-6-2.11V5l6 2.11V19z"/></svg></span><span id="t57" class="t" style="font-size:11.375px;font-weight:400;color:#374151;letter-spacing:0.011px;">State Regulation Analyst</span></div>
<div class="ag" style="top:157.1px"><span class="ab" style="background:#ef4444"><svg class="ic" width="14" height="14" viewBox="0 0 24 24" style="width:14px;height:14px;fill:#fff;"><path d="M19 14V6c0-1.1-.9-2-2-2H3c-1.1 0-2 .9-2 2v8c0 1.1.9 2 2 2h14c1.1 0 2-.9 2-2zm-9-1c-1.66 0-3-1.34-3-3s1.34-3 3-3 3 1.34 3 3-1.34 3-3 3zm13-6v11c0 1.100-.9 2-2 2H4v-2h17V7h2z"/></svg></span><span id="t58" class="t" style="font-size:11.375px;font-weight:400;color:#374151;letter-spacing:-0.072px;">Wage &amp; Hour Specialist</span></div>
<div class="ag" style="top:188.0px"><span class="ab" style="background:#8b5cf6"><svg class="ic" width="14" height="14" viewBox="0 0 24 24" style="width:14px;height:14px;fill:#fff;"><path d="M20 3H4c-1.1 0-2 .9-2 2v14c0 1.1.9 2 2 2h16c1.1 0 2-.9 2-2V5c0-1.1-.9-2-2-2zM10 17H5v-2h5v2zm0-4H5v-2h5v2zm0-4H5V7h5v2zm4.82 6L12 12.16l1.41-1.41 1.41 1.42L17.990 9l1.42 1.42L14.82 15z"/></svg></span><span id="t59" class="t" style="font-size:11.375px;font-weight:400;color:#374151;letter-spacing:0.079px;">Document Compliance Auditor</span></div>
<div class="ag" style="top:218.9px"><span class="ab" style="background:#f97316"><svg class="ic" width="14" height="14" viewBox="0 0 24 24" style="width:14px;height:14px;fill:#fff;"><path d="M19 3H5c-1.1 0-2 .9-2 2v14c0 1.1.9 2 2 2h14c1.1 0 2-.9 2-2V5c0-1.1-.9-2-2-2zM9 17H7v-5h2v5zm4 0h-2v-3h2v3zm0-5h-2v-2h2v2zm4 5h-2V7h2v10z"/></svg></span><span id="t60" class="t" style="font-size:11.375px;font-weight:400;color:#374151;letter-spacing:-0.055px;">Risk Prediction Engine</span></div>
<div class="ag" style="top:249.8px"><span class="ab" style="background:#14b8a6"><svg class="ic" viewBox="0 0 24 24" style="width:14px;height:14px;fill:#fff"><path d="M9 15c-2.67 0-8 1.34-8 4v2h16v-2c0-2.660-5.330-4-8-4zM4.740 9h8.530c.27 0 .49-.22.49-.49v-.02c0-.27-.22-.49-.49-.49H13c0-1.480-.81-2.750-2-3.450v.95c0 .28-.22.5-.5.5s-.5-.22-.5-.5V4.140C9.680 4.060 9.350 4 9 4s-.68.060-1 .14V5.500c0 .28-.22.5-.5.5S7 5.780 7 5.500v-.95C5.810 5.250 5 6.520 5 8h-.26c-.27 0-.49.22-.49.490v.03c0 .26.22.48.490.48zM9 13c1.860 0 3.410-1.280 3.860-3H5.140c.45 1.720 2 3 3.860 3z"/><g fill="none" stroke="#fff"><circle cx="19.500" cy="6.500" r="1.900" stroke-width="1.700"/><circle cx="19.500" cy="6.500" r="2.900" stroke-width="1.100" stroke-dasharray="1.140 1.140"/><circle cx="17.900" cy="12.400" r="1.200" stroke-width="1.300"/><circle cx="17.900" cy="12.400" r="2" stroke-width=".9" stroke-dasharray=".79 .79"/></g></svg></span><span id="t61" class="t" style="font-size:11.375px;font-weight:400;color:#374151;letter-spacing:0.054px;">Remediation Strategist</span></div>
</div>
<div class="sc" style="left:1079.25px;top:619.1px;width:798.3px;height:288.9px"><div class="scbg" style="top:.4px"></div>
<div class="sh nd" style="top:14px;height:21px"><svg class="ic" width="20" height="20" viewBox="0 0 24 24" style="width:20px;height:20px;fill:#3b82f6;"><path d="M20.38 8.57l-1.23 1.85a8 8 0 0 1-.22 7.58H5.07A8 8 0 0 1 15.58 6.85l1.85-1.23A10 10 0 0 0 3.35 19a2 2 0 0 0 1.72 1h13.85a2 2 0 0 0 1.74-1 10 10 0 0 0-.27-10.44zm-9.79 6.84a2 2 0 0 0 2.83 0l5.66-8.49-8.49 5.66a2 2 0 0 0 0 2.83z"/></svg><span id="t62" class="t" style="font-size:11.5px;font-weight:700;color:#1e293b;letter-spacing:-0.052px;">Analysis Depth</span></div>
<div class="sdv" style="top:44.6px"></div>
<div class="op" style="top:56.5px"><svg class="ic" width="20" height="20" viewBox="0 0 24 24" style="width:20px;height:20px;fill:#9ca3af;"><path d="M11 21h-1l1-7H7.5c-.58 0-.57-.32-.38-.66.19-.34.05-.08.07-.12C8.48 10.94 10.42 7.54 13 3h1l-1 7h3.5c.49 0 .56.33.47.51l-.07.15C12.96 17.55 11 21 11 21z"/></svg><div class="ot"><div><span id="t63" class="t" style="font-size:11.375px;font-weight:700;color:#1e293b;letter-spacing:-0.354px;">Quick</span></div><div><span id="t64" class="t" style="font-size:9.625px;font-weight:400;color:#6b7280;letter-spacing:0.038px;">~2 min - High-level scan</span></div></div></div>
<div class="op" style="top:121.3px"><svg class="ic" width="20" height="20" viewBox="0 0 24 24" style="width:20px;height:20px;fill:#9ca3af;"><path d="M13 7.83c.85-.3 1.53-.98 1.83-1.83H18l-3 7c0 1.66 1.57 3 3.5 3s3.5-1.34 3.5-3l-3-7h2V4h-6.17c-.41-1.17-1.52-2-2.83-2s-2.42.83-2.83 2H3v2h2l-3 7c0 1.66 1.57 3 3.5 3S9 14.66 9 13L6 6h3.17c.3.85.98 1.53 1.83 1.83V19H2v2h20v-2h-9V7.830zM20.37 13h-3.74l1.87-4.36L20.37 13zm-13 0H3.630L5.500 8.640 7.370 13zM12 6c-.55 0-1-.45-1-1s.45-1 1-1 1 .45 1 1-.45 1-1 1z"/></svg><div class="ot"><div><span id="t65" class="t" style="font-size:11.375px;font-weight:700;color:#1e293b;letter-spacing:-0.029px;">Standard</span></div><div><span id="t66" class="t" style="font-size:9.625px;font-weight:400;color:#6b7280;">~5 min - Balanced analysis</span></div></div></div>
<div class="op sel" style="top:186.15px"><svg class="ic" width="20" height="20" viewBox="0 0 24 24" style="width:20px;height:20px;fill:#3b82f6;"><path d="M15.5 14h-.79l-.28-.27C15.41 12.59 16 11.11 16 9.5 16 5.91 13.09 3 9.5 3S3 5.91 3 9.5 5.91 16 9.5 16c1.61 0 3.09-.59 4.23-1.57l.27.28v.79l5 4.99L20.49 19l-4.99-5zm-6 0C7.01 14 5 11.99 5 9.5S7.01 5 9.5 5 14 7.01 14 9.500 11.99 14 9.5 14z"/></svg><div class="ot"><div><span id="t67" class="t" style="font-size:11.375px;font-weight:700;color:#1e293b;letter-spacing:-0.212px;">Comprehensive</span></div><div><span id="t68" class="t" style="font-size:9.625px;font-weight:400;color:#6b7280;letter-spacing:-0.001px;">~10 min - Deep analysis</span></div></div></div>
</div>
<div class="sum">
<span class="si"><svg class="ic" width="18.5" height="18.5" viewBox="0 0 24 24" style="width:18.5px;height:18.5px;fill:#3b82f6;"><path d="M11.99 2C6.47 2 2 6.48 2 12s4.47 10 9.99 10C17.52 22 22 17.52 22 12S17.52 2 11.99 2zM12 20c-4.42 0-8-3.58-8-8s3.58-8 8-8 8 3.58 8 8-3.58 8-8 8zm.5-13H11v6l5.25 3.15.75-1.23-4.5-2.67z"/></svg><span id="t69" class="t" style="font-size:12.25px;font-weight:400;color:#475569;letter-spacing:0.142px;">Estimated time: 10 minutes</span></span>
<span class="si"><svg class="ic" width="18.5" height="18.5" viewBox="0 0 24 24" style="width:18.5px;height:18.5px;fill:#3b82f6;"><path d="M20 9V7c0-1.1-.9-2-2-2h-3c0-1.66-1.34-3-3-3S9 3.34 9 5H6c-1.1 0-2 .9-2 2v2c-1.66 0-3 1.34-3 3s1.34 3 3 3v4c0 1.1.9 2 2 2h12c1.1 0 2-.9 2-2v-4c1.66 0 3-1.34 3-3s-1.34-3-3-3zM7.5 11.5c0-.83.67-1.5 1.5-1.5s1.5.67 1.5 1.5S9.83 13 9 13s-1.5-.67-1.5-1.5zM16 17H8v-2h8v2zm-1-4c-.83 0-1.5-.67-1.5-1.5S14.17 10 15 10s1.5.67 1.5 1.5S15.83 13 15 13z"/></svg><span id="t70" class="t" style="font-size:12.25px;font-weight:400;color:#475569;letter-spacing:0.043px;">7 agents will be deployed</span></span>
<span class="si"><svg class="ic" width="18.5" height="18.5" viewBox="0 0 24 24" style="width:18.5px;height:18.5px;fill:#3b82f6;"><path d="M21 5l-9-4-9 4v6c0 5.55 3.84 10.74 9 12 2.3-.56 4.33-1.9 5.88-3.71l-3.12-3.12c-1.94 1.29-4.58 1.07-6.29-.64-1.95-1.95-1.95-5.12 0-7.07 1.95-1.95 5.12-1.95 7.07 0 1.71 1.71 1.92 4.35.64 6.29l2.9 2.9C20.29 15.69 21 13.38 21 11V5zM12 9a3 3 0 1 0 0 6 3 3 0 0 0 0-6z"/></svg><span id="t71" class="t" style="font-size:12.25px;font-weight:400;color:#475569;letter-spacing:0.006px;">4 compliance areas will be analyzed</span></span>
</div>
</section>
<div class="back"><svg width="13" height="14" viewBox="0 0 13 14" fill="none" stroke="#4b5768" stroke-width="1.15" stroke-linecap="butt" stroke-linejoin="miter"><path d="M12.300 7H1.300M7 1.200L1.200 7 7 12.800"/></svg><span id="t72" class="t" style="font-size:12.25px;font-weight:400;color:#475569;letter-spacing:0.053px;">Back</span></div>
<div class="launch"><svg class="ic" width="20.25" height="20.25" viewBox="0 0 24 24" style="width:20.25px;height:20.25px;fill:#fff;"><path d="M9.19 6.35c-2.04 2.29-3.44 5.58-3.57 5.89L2 10.69l4.05-4.05c.47-.47 1.15-.68 1.81-.55l1.33.26zM11.17 17s3.74-1.55 5.89-3.7c5.4-5.4 4.5-9.62 4.21-10.57-.95-.3-5.17-1.19-10.57 4.21C8.55 9.09 7 12.83 7 12.83L11.17 17zm6.48-2.19c-2.29 2.04-5.58 3.44-5.89 3.57L13.31 22l4.05-4.05c.47-.47.68-1.15.55-1.81l-.26-1.33zM9 18c0 .83-.34 1.58-.88 2.12C6.94 21.3 2 22 2 22s.7-4.94 1.88-6.12C4.42 15.34 5.17 15 6 15c1.66 0 3 1.34 3 3zm4-9c0-1.1.9-2 2-2s2 .9 2 2-.9 2-2 2-2-.9-2-2z"/></svg><span id="t73" class="t" style="font-size:14.35px;font-weight:700;color:#fff;letter-spacing:-0.647px;">Launch Analysis</span></div>
</main>
</div></body></html>
